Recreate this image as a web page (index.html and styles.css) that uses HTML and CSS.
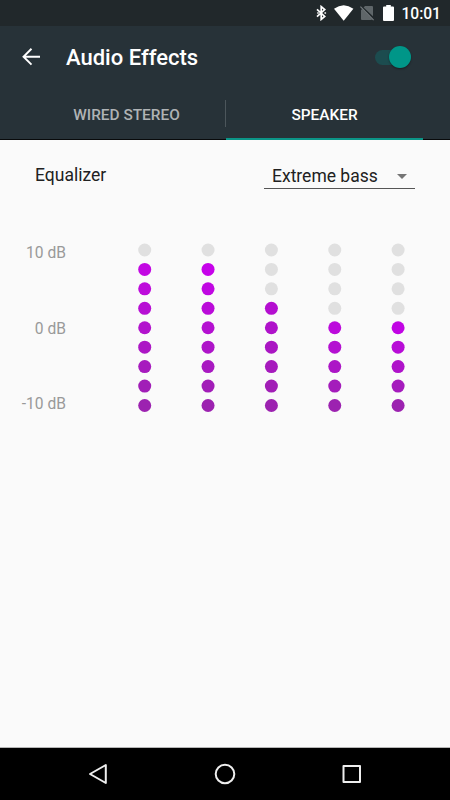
FILE: index.html
```html
<!DOCTYPE html>
<html lang="en">
<head>
    <meta charset="UTF-8">
    <meta name="viewport" content="width=device-width, initial-scale=1.0">
    <title>Audio Effects</title>
    <link rel="stylesheet" href="styles.css">
</head>
<body>
    <div class="status-bar">
        <svg class="bluetooth" width="11" height="16" viewBox="0 0 11 16">
            <path d="M1 4.4 L8.7 11.4 L5.2 14.4 V1.6 L8.7 4.6 L1 11.6" fill="none" stroke="#fff" stroke-width="1.7"/>
            <path d="M2 7 L3.2 8 L2 9 L0.8 8 Z M9.2 7 L10.4 8 L9.2 9 L8 8 Z" fill="#fff"/>
        </svg>
        <svg class="wifi" width="20" height="16" viewBox="0 0 20 16">
            <path d="M0 3.7 Q9.7 -3.3 19.4 3.7 L9.7 15.8 Z" fill="#fff"/>
        </svg>
        <svg class="sim" width="14" height="16" viewBox="0 0 14 16">
            <path d="M5 1 H12 Q13 1 13 2 V11.3 L3.6 2.4 Z M1 5 L2.2 4 L12 14.2 L11.4 15 H2 Q1 15 1 14 Z" fill="#5f6669"/>
            <path d="M0.4 1.6 L13.6 15.2" stroke="#777d80" stroke-width="1.2"/>
        </svg>
        <svg class="battery" width="11" height="16" viewBox="0 0 11 16">
            <path d="M3.2 0 H7.8 V1.6 H10 Q11 1.6 11 2.6 V15 Q11 16 10 16 H1 Q0 16 0 15 V2.6 Q0 1.6 1 1.6 H3.2 Z" fill="#fff"/>
        </svg>
        <span class="clock">10:01</span>
    </div>

    <header class="header">
        <div class="toolbar">
            <svg class="back" width="18" height="18" viewBox="0 0 18 18">
                <path d="M18 8.7 H1.5 M9.5 0.8 L1.5 8.7 L9.5 16.6" fill="none" stroke="#fff" stroke-width="1.9"/>
            </svg>
            <h1>Audio Effects</h1>
            <div class="switch"><span class="thumb"></span></div>
        </div>
        <nav class="tabs">
            <div class="tab">WIRED STEREO</div>
            <div class="divider"></div>
            <div class="tab active">SPEAKER</div>
        </nav>
    </header>

    <main class="content">
        <div class="preset-row">
            <span class="label">Equalizer</span>
            <div class="preset">
                <span>Extreme bass</span>
                <span class="arrow"></span>
            </div>
        </div>

        <div class="equalizer">
            <div class="scale">
                <span>10 dB</span>
                <span>0 dB</span>
                <span>-10 dB</span>
            </div>
            <svg class="bands" id="bands" width="268" height="170" viewBox="0 0 268 170"></svg>
        </div>
    </main>

    <footer class="nav-bar">
        <svg width="20" height="22" viewBox="0 0 20 22">
            <path d="M17.8 2 V20 L2 11 Z" fill="none" stroke="#eee" stroke-width="2" stroke-linejoin="round"/>
        </svg>
        <svg width="22" height="22" viewBox="0 0 22 22">
            <circle cx="11" cy="11" r="9.3" fill="none" stroke="#eee" stroke-width="2"/>
        </svg>
        <svg width="20" height="22" viewBox="0 0 20 22">
            <rect x="1.5" y="3" width="16.5" height="16" fill="none" stroke="#eee" stroke-width="2" stroke-linejoin="round"/>
        </svg>
    </footer>

    <script>
        // Number of lit dots and colour of the top one, for each band
        const bands = [
            { level: 8, top: [194, 8, 226] },
            { level: 8, top: [198, 2, 234] },
            { level: 6, top: [180, 14, 208] },
            { level: 5, top: [188, 10, 220] },
            { level: 5, top: [193, 4, 228] }
        ];
        const base = [156, 34, 176];
        const chart = document.getElementById('bands');

        bands.forEach((band, column) => {
            for (let i = 0; i < 9; i++) {
                const dot = document.createElementNS('http://www.w3.org/2000/svg', 'circle');
                dot.setAttribute('class', 'dot');
                dot.setAttribute('cx', 6.7 + column * 63.35);
                dot.setAttribute('cy', 162.5 - i * 19.44);
                dot.setAttribute('r', 6.5);
                if (i < band.level) {
                    const t = i / (band.level - 1);
                    const color = base.map((c, k) => Math.round(c + (band.top[k] - c) * t));
                    dot.style.fill = `rgb(${color.join(',')})`;
                }
                chart.appendChild(dot);
            }
        });
    </script>
</body>
</html>
```
FILE: styles.css
```css
* {
    box-sizing: border-box;
}
body {
    margin: 0;
    height: 800px;
    display: flex;
    flex-direction: column;
    font-family: Roboto, sans-serif;
    background-color: #fafafa;
    color: #212121;
    overflow: hidden;
}
svg {
    display: block;
    flex: none;
}
.status-bar {
    height: 26px;
    display: flex;
    align-items: center;
    justify-content: flex-end;
    padding-right: 9px;
    background-color: #21282b;
    color: #fff;
}
.wifi {
    margin-left: 7px;
}
.sim {
    margin-left: 6px;
}
.battery {
    margin-left: 9px;
}
.clock {
    width: 39px;
    margin-left: 8px;
    padding-top: 2px;
    font-size: 15.6px;
    font-weight: 500;
    line-height: 26px;
    white-space: nowrap;
    display: flex;
    justify-content: flex-end;
}
.header {
    height: 114px;
    background-color: #273238;
    border-bottom: 1px solid #080a0b;
    color: #fff;
}
.toolbar {
    height: 62px;
    display: flex;
    align-items: center;
    padding: 0 39px 0 22px;
}
.toolbar h1 {
    flex: 1;
    margin: 1px 0 0 26px;
    font-size: 22px;
    font-weight: 500;
    line-height: 26px;
}
.switch {
    width: 36px;
    height: 15px;
    border-radius: 8px;
    background-color: #1c4c4f;
    display: flex;
    align-items: center;
    justify-content: flex-end;
}
.thumb {
    flex: none;
    width: 22px;
    height: 22px;
    border-radius: 50%;
    background-color: #009688;
    box-shadow: 0 1px 2px rgba(0, 0, 0, 0.4);
}
.tabs {
    height: 51px;
    display: flex;
    padding-left: 28px;
}
.tab {
    width: 197px;
    height: 52px;
    text-align: center;
    font-size: 15.4px;
    font-weight: 500;
    line-height: 54px;
    color: #afb3b5;
}
.tab.active {
    color: #fff;
    border-bottom: 2px solid #0b9587;
}
.divider {
    width: 1px;
    height: 27px;
    margin-top: 12px;
    background-color: #4c565b;
}
.content {
    flex: 1;
    border-bottom: 1px solid #b5b5b5;
}
.preset-row {
    display: flex;
    justify-content: space-between;
    padding: 23px 35px 0;
    font-size: 17.5px;
}
.label {
    line-height: 24px;
}
.preset {
    width: 151px;
    height: 26px;
    display: flex;
    align-items: center;
    justify-content: space-between;
    padding: 1px 8px 0;
    border-bottom: 1px solid #555;
    white-space: nowrap;
}
.arrow {
    border: 5.5px solid transparent;
    border-top-color: #757575;
    border-bottom: none;
}
.equalizer {
    display: flex;
    padding-top: 54px;
}
.scale {
    width: 66px;
    height: 171px;
    display: flex;
    flex-direction: column;
    justify-content: space-between;
    text-align: right;
    font-size: 15.6px;
    line-height: 20px;
    color: #999;
}
.bands {
    margin-left: 72px;
}
.dot {
    fill: #e0e0e0;
}
.nav-bar {
    height: 52px;
    display: flex;
    align-items: center;
    justify-content: space-between;
    padding: 0 88px;
    background-color: #000;
}
```
